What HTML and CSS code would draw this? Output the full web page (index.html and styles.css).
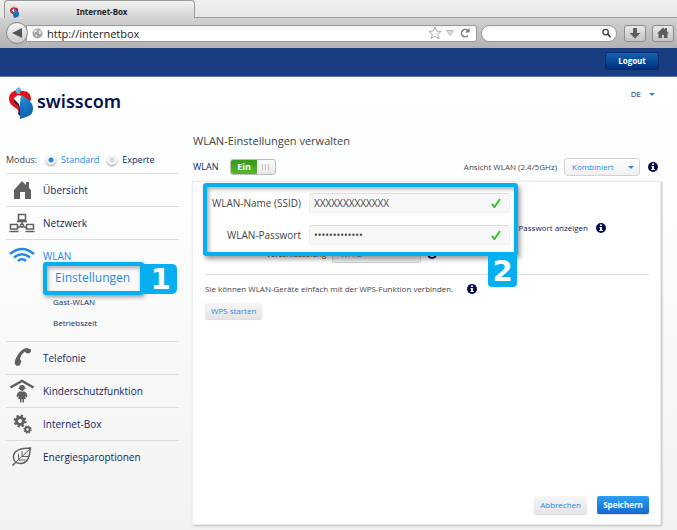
FILE: index.html
```html
<!DOCTYPE html>
<html lang="de">
<head>
<meta charset="utf-8">
<meta name="viewport" content="width=device-width, initial-scale=1">
<title>Internet-Box</title>
<link rel="stylesheet" href="styles.css">
</head>
<body>
<svg class="defs" aria-hidden="true">
  <defs>
    <linearGradient id="red" x1="0" y1="0" x2="1" y2="1"><stop offset="0" stop-color="#f0121c"/><stop offset="1" stop-color="#d80d18"/></linearGradient>
    <linearGradient id="blue" x1="0" y1="0" x2="1" y2="1"><stop offset="0" stop-color="#6fcdf2"/><stop offset=".5" stop-color="#1c80cc"/><stop offset="1" stop-color="#0a57a8"/></linearGradient>
  </defs>
  <symbol id="mark" viewBox="0 0 24 32">
    <path fill="url(#red)" d="M8 3C3 4 0 7 0 12c0 4 3 7 8 10l3 4 2-14 8 3 1-3c0-5-3-8-8-8z"/>
    <path fill="#fff" d="M5 11l4-3 3 1v10l-2 3-1-3-4-3z"/>
    <path fill="#4a0d22" d="M5 12l5 5 1 4 1 9-3-3 1-4-1-4-4-3z"/>
    <path fill="url(#blue)" d="M7 2l2.500-2L12 2l-1 5H9C7 6 6 4 7 2zM12 8c6 3 12 7 12 13 0 6-3 8-7 9l-6 2V17z"/>
    <path fill="#0b4c9b" d="M12 9l5 21-6 2V17z" opacity=".3"/>
  </symbol>
  <symbol id="info" viewBox="0 0 10 10"><circle cx="5" cy="5" r="5" fill="#020b52"/><path fill="#fff" d="M4 1.500h2v1.500H4zM3.500 4H6v3h.8v1H3.400V7H4V5h-.5z"/></symbol>
  <symbol id="check" viewBox="0 0 10 10"><path d="M1 6l2.500 3L9 1" fill="none" stroke="#2fca2f" stroke-width="2"/></symbol>
</svg>

<header class="browser">
  <div class="tabs">
    <div class="tab"><svg class="favicon"><use href="#mark"/></svg><span>Internet-Box</span></div>
    <div class="tab-rest"></div>
  </div>
  <div class="toolbar">
    <button class="back" aria-label="Zurück"><svg viewBox="0 0 10 10"><path d="M0 5l10-5v10z" fill="#555"/></svg></button>
    <div class="address">
      <svg class="globe" viewBox="0 0 12 12"><circle cx="6" cy="6" r="5.500" fill="#a2a2a2"/><path fill="#e6e6e6" d="M2 3l2-1.500 2 .5-1 2-2 1-.5 2zM7 3l2-.5 1.500 2L9 7 7.500 6zM4 7l2 .5L5 10 4 9z"/></svg>
      <input type="text" value="http://internetbox" aria-label="Adresse">
      <svg class="star" viewBox="0 0 14 14"><path d="M7 1l1.700 4 4.300.4-3.300 2.800 1 4.300L7 10.200l-3.700 2.300 1-4.300L1 5.400 5.300 5z" fill="#fff" stroke="#aaa"/></svg>
      <svg class="drop" viewBox="0 0 8 6"><path d="M.5.500h7L4 5.500z" fill="#ddd" stroke="#bbb"/></svg>
      <svg class="reload" viewBox="0 0 10 10"><path d="M8 7.500A3.700 3.700 0 1 1 7.500 2.200" fill="none" stroke="#777" stroke-width="1.500"/><path d="M9.500 0v4.500H5z" fill="#777"/></svg>
    </div>
    <div class="search">
      <input type="search" aria-label="Suche">
      <svg viewBox="0 0 10 10"><circle cx="4" cy="4" r="3" fill="none" stroke="#444" stroke-width="1.500"/><path d="M6 6l3.500 3.500" stroke="#444" stroke-width="2"/></svg>
    </div>
    <button class="tool" aria-label="Downloads"><svg viewBox="0 0 12 12"><path d="M4 1h4v5h3.500L6 11.500.5 6H4z" fill="#5e5e5e"/></svg></button>
    <button class="tool" aria-label="Startseite"><svg viewBox="0 0 12 12"><path d="M6 .5l2 2V1h2v3.500L12 6.500h-1.500V11H7V8H5v3H1.500V6.500H0z" fill="#5e5e5e"/></svg></button>
  </div>
</header>

<div class="topbar"><button class="logout">Logout</button></div>

<div class="brandbar">
  <a class="brand" href="#"><svg><use href="#mark"/></svg><span>swisscom</span></a>
  <button class="lang">DE <i class="caret"></i></button>
</div>

<div class="page">
  <aside>
    <div class="mode" role="radiogroup" aria-label="Modus">
      <span>Modus:</span>
      <label class="on"><input type="radio" name="mode" checked>Standard</label>
      <label><input type="radio" name="mode">Experte</label>
    </div>
    <nav>
      <div class="item"><a href="#"><svg viewBox="0 0 26 22"><path fill="#606060" d="M13 2l4 4V3h3v6l2 2v9h-6v-7h-5v7H5v-9z"/></svg>Übersicht</a></div>
      <div class="item"><a href="#"><svg viewBox="0 0 26 22"><g fill="none" stroke="#606060" stroke-width="1.500"><path d="M9.500 2.500h7V8h-7zM1.500 12.500h7V17h-7zM17.500 12.500h7V17h-7zM13 8v4M9 15.500l3-1M14 14.500l3 1M8 9.500h10M.5 19.500h9M16.500 19.500h9"/><circle cx="13" cy="13.500" r="1.500"/></g></svg>Netzwerk</a></div>
      <div class="item active">
        <a href="#"><svg viewBox="0 0 26 22"><g fill="none" stroke="#2489ea" stroke-width="2.400"><path d="M1 9Q13-1 25 9M5 12.500q8-6.500 16 0M9 16q4-3.500 8 0"/></g></svg>WLAN</a>
        <ul>
          <li class="current"><a href="#">Einstellungen</a><b class="badge one">1</b></li>
          <li><a href="#">Gast-WLAN</a></li>
          <li><a href="#">Betriebszeit</a></li>
        </ul>
      </div>
      <div class="item"><a href="#"><svg viewBox="0 0 26 22"><path fill="#606060" d="M18 1l4 1.500c.5 1.500-.5 3-2 4l-3-.5-1-1.500c-3 2-5 5-5 8l1.500 1.500-1.500 4c-2 1.500-4 1-5-1-1-3 2-9 6-13 2-2 4-3 6-3z"/></svg>Telefonie</a></div>
      <div class="item"><a href="#"><svg class="tall" viewBox="0 0 26 24"><path d="M1.500 8.500L13 2l11.500 6.500" fill="none" stroke="#606060" stroke-width="2.500"/><path fill="#606060" d="M10 9q0-3 3-3t3 3l1 1h-1.500q-2.500 4-5 0H9zM10.500 12.500h5l2 1.500 1 3-1 1.500-1.500-2 1 3.500H15v3.500h-1.500V20h-1v3.500H11V20H9l1-3.500-1.500 2-1-1.500 1-3z"/></svg>Kinderschutzfunktion</a></div>
      <div class="item"><a href="#"><svg viewBox="0 0 26 22"><g fill="none" stroke="#606060"><circle cx="11" cy="8" r="3.500" stroke-width="3"/><circle cx="11" cy="8" r="5.500" stroke-width="2" stroke-dasharray="2.300 2.020"/><circle cx="18.500" cy="16.500" r="2.200" stroke-width="2"/><circle cx="18.500" cy="16.500" r="3.500" stroke-width="1.300" stroke-dasharray="1.500 1.250"/></g></svg>Internet-Box</a></div>
      <div class="item"><a href="#"><svg viewBox="0 0 26 22"><g fill="none" stroke="#606060"><path stroke-width="1.500" d="M21.500 2C13 2 4 4 4.500 11c0 4 3 6.500 7 6.500 8 0 9-8 10-15.500zM3.500 19.500L7 16"/><path d="M7 16L21 3M9.500 14V7.500M13 10.500V5M9.500 14h7M13 10.500h6"/></g></svg>Energiesparoptionen</a></div>
    </nav>
  </aside>

  <main>
    <h1>WLAN-Einstellungen verwalten</h1>
    <div class="controls">
      <label class="wlan">WLAN <input type="checkbox" checked><span class="switch"><span>Ein</span><i></i></span></label>
      <label class="view" for="view">Ansicht WLAN (2.4/5GHz)</label>
      <span class="select"><select id="view"><option>Kombiniert</option></select><i class="caret"></i></span>
      <svg class="info"><use href="#info"/></svg>
    </div>
    <form class="panel">
      <div class="highlight">
        <label for="ssid">WLAN-Name (SSID)</label>
        <div class="field"><input id="ssid" type="text" value="XXXXXXXXXXXXX"><svg><use href="#check"/></svg></div>
        <label for="pw">WLAN-Passwort</label>
        <div class="field"><input id="pw" type="password" value="internetbox12" autocomplete="off"><svg><use href="#check"/></svg></div>
        <b class="badge two">2</b>
      </div>
      <div class="show"><a href="#">Passwort anzeigen</a><svg class="info"><use href="#info"/></svg></div>
      <div class="crypt">
        <label for="crypt">Verschlüsselung</label>
        <span class="select wide"><select id="crypt"><option>WPA2</option></select><i class="caret"></i></span>
        <svg class="info"><use href="#info"/></svg>
      </div>
      <div class="wps"><p>Sie können WLAN-Geräte einfach mit der WPS-Funktion verbinden.</p><svg class="info"><use href="#info"/></svg></div>
      <button type="button" class="btn">WPS starten</button>
      <div class="actions"><button type="button" class="btn">Abbrechen</button><button type="button" class="btn primary">Speichern</button></div>
    </form>
  </main>
</div>
</body>
</html>
```

FILE: styles.css
```css
* { box-sizing: border-box; }
body {
  margin: 0;
  min-height: 100vh;
  display: flex;
  flex-direction: column;
  font: 400 10px/14px "Open Sans", "Noto Sans", sans-serif;
  color: #444;
  background: linear-gradient(#fff 76px, #fdfefe 180px, #f2f2f2 100%);
}
button, input, select { font: inherit; color: inherit; margin: 0; padding: 0; border: 0; background: none; outline: 0; }
a { color: inherit; text-decoration: none; }
svg { display: block; flex: none; }
.defs { position: absolute; width: 0; height: 0; }

.browser { background: linear-gradient(#efefef, #e6e6e6 17px, #d0d0d0 19px, #b2b2b2); }
.tabs { display: flex; height: 18px; }
.tab {
  display: flex;
  align-items: center;
  width: 191px;
  margin-left: 4px;
  padding: 4px 5px 0;
  border: 1px solid #999;
  border-bottom: 0;
  border-radius: 4px 4px 0 0;
  background: linear-gradient(#f2f2f2, #d3d3d3);
  color: #222;
  font: bold 8px/14px "Noto Sans", sans-serif;
}
.tab span { flex: 1; text-align: center; padding-right: 4px; }
.favicon { width: 9px; height: 12px; }
.tab-rest { flex: 1; border-bottom: 1px solid #999; }
.toolbar { display: flex; align-items: center; height: 30px; padding: 0 3px 0 6px; }
.back {
  display: grid;
  place-items: center;
  width: 22px;
  height: 22px;
  border: 1px solid #888;
  border-radius: 50%;
  background: linear-gradient(#f5f5f5, #ccc);
  z-index: 1;
}
.back svg { width: 10px; height: 10px; }
.address, .search {
  display: flex;
  align-items: center;
  height: 17px;
  border: 1px solid #999;
  background: linear-gradient(#f4f4f4, #fff 5px);
}
.address { flex: 1; gap: 4px; margin-left: -2px; padding: 0 3px 0 5px; border-radius: 0 3px 3px 0; }
.address input { flex: 1; min-width: 0; font-size: 11px; line-height: 15px; color: #222; }
.globe { width: 11px; height: 11px; }
.star { width: 14px; height: 14px; }
.drop { width: 8px; height: 6px; }
.reload { width: 10px; height: 10px; margin: 0 3px 0 2px; }
.search { width: 136px; margin: 0 7px 0 4px; padding: 0 5px; border-radius: 9px; }
.search input { flex: 1; min-width: 0; }
.search svg { width: 9px; height: 10px; }
.tool {
  display: grid;
  place-items: center;
  width: 22px;
  height: 17px;
  border: 1px solid #8c8c8c;
  border-radius: 3px;
  background: linear-gradient(#e8e8e8, #c4c4c4);
}
.tool + .tool { margin-left: 6px; }
.tool svg { width: 12px; height: 12px; }

.topbar { display: flex; justify-content: flex-end; height: 29px; padding: 4px 18px 0; background: #193d80; border-bottom: 1px solid #5a75a8; }
.logout {
  width: 54px;
  height: 18px;
  border: 1px solid #062a6b;
  border-radius: 2px;
  background: linear-gradient(#1064b4, #012e78);
  color: #fff;
  font-size: 8px;
  font-weight: 700;
}

.brandbar { display: flex; justify-content: space-between; align-items: flex-start; height: 53px; padding: 10px 22px 0 9px; }
.brand { display: flex; gap: 4px; color: #06104f; font: 600 18px/28px "Noto Sans", sans-serif; }
.brand svg { width: 24px; height: 32px; }
.lang { display: flex; align-items: center; gap: 8px; color: #111f5e; font-size: 8px; line-height: 14px; }
.caret { border: 3px solid transparent; border-top-color: #2489ea; border-bottom: 0; width: 0; height: 0; }

.page { flex: 1; display: grid; grid-template-columns: 173px 1fr; column-gap: 13px; padding: 0 16px 5px 6px; }
.mode { display: flex; align-items: center; height: 43px; padding-top: 17px; font-size: 9px; }
.mode span { width: 40px; }
.mode label { display: flex; align-items: center; gap: 5px; margin-right: 8px; color: #111f5e; font-weight: 500; }
.mode .on { color: #2489ea; }
.mode input {
  appearance: none;
  width: 10px;
  height: 10px;
  border-radius: 50%;
  background: radial-gradient(#d9d9d9 2px, #f4f4f4 3px);
  box-shadow: 0 1px 2px #888;
}
.mode input:checked { background: radial-gradient(#2489ea 2px, #f4f4f4 3px); }

.item { border-top: 1px solid #dcdcdc; }
.item > a { display: flex; align-items: center; gap: 8px; height: 32px; padding-left: 3px; color: #111f5e; font-weight: 500; }
.item svg { width: 26px; height: 22px; }
.item svg.tall { height: 24px; }
.item.active > a { color: #2489ea; }
.item ul { position: relative; margin: 0; padding: 19px 0 8px; list-style: none; font-size: 8px; font-weight: 500; line-height: 21px; color: #111f5e; }
.item li { padding-left: 47px; }
.item .current {
  position: absolute;
  left: 37px;
  top: -10px;
  width: 101px;
  height: 33px;
  padding: 0 0 0 8px;
  border: 4px solid #05aff0;
  border-radius: 3px;
  background: #fafafa;
  box-shadow: 1px 2px 4px #0006, inset 1px 2px 4px #0005;
  color: #2489ea;
  font-size: 12px;
  line-height: 24px;
}
.badge {
  position: absolute;
  display: grid;
  place-items: center;
  background: #05aff0;
  color: #fff;
  font: bold 29px/28px "DejaVu Sans", "Open Sans", sans-serif;
}
.one { left: 97px; top: -2px; width: 33px; height: 30px; border-radius: 0 5px 5px 0; }
.two { right: -3px; top: 68px; width: 29px; height: 32px; border-radius: 0 0 4px 4px; }

main { display: flex; flex-direction: column; min-width: 0; }
h1 { margin: 4px 0 10px 1px; font-size: 11px; font-weight: 400; line-height: 14px; color: #444; }
.controls { display: flex; align-items: center; height: 18px; margin-bottom: 5px; padding-left: 1px; font-size: 8px; }
.wlan { position: relative; display: flex; align-items: center; justify-content: space-between; width: 83px; margin-right: auto; color: #111f5e; font-size: 9px; font-weight: 500; }
.wlan input { position: absolute; opacity: 0; }
.switch { display: flex; width: 46px; height: 16px; border: 1px solid #bbb; border-radius: 3px; overflow: hidden; background: linear-gradient(#fff, #e5e5e5); line-height: 14px; text-align: center; }
.switch span { width: 26px; background: linear-gradient(#38961c, #58b829); color: #fff; font-weight: bold; }
.switch i { width: 7px; height: 6px; margin: 4px 5px; background: repeating-linear-gradient(90deg, #c4c4c4 0 1px, transparent 1px 3px); }
.view { margin-right: 7px; }
.select { position: relative; width: 76px; height: 18px; margin-right: 8px; }
.select select { appearance: none; width: 100%; height: 100%; padding-left: 7px; border: 1px solid #d2d2d2; border-radius: 3px; background: linear-gradient(#fff, #f0f0f0); color: #2489ea; font-weight: 500; }
.select .caret { position: absolute; right: 6px; top: 8px; pointer-events: none; }
.select.wide { width: 89px; }
.wide select { background: #f0f0f0; }
.info { width: 10px; height: 10px; }
.controls .info { margin-right: 3px; }

.panel { position: relative; flex: 1; display: flex; flex-direction: column; align-items: flex-start; padding: 37px 11px 10px 12px; background: #fff; border: 1px solid #ececec; box-shadow: 1px 1px 2px #bbb; font-size: 8px; }
.highlight {
  position: absolute;
  z-index: 1;
  left: 10px;
  top: 1px;
  width: 315px;
  height: 73px;
  display: grid;
  grid-template-columns: 94px 1fr;
  align-content: center;
  align-items: center;
  gap: 12px 8px;
  padding: 0 4px 2px 0;
  border: 4px solid #05aff0;
  border-radius: 3px;
  background: #fff;
  box-shadow: 2px 3px 5px #0006, inset 2px 2px 4px #0005;
  font-size: 10px;
  text-align: right;
  white-space: nowrap;
}
.field { display: flex; align-items: center; height: 20px; padding: 0 8px 0 4px; border: 1px solid #eee; border-top-color: #ddd; border-radius: 3px; background: #f7f7f7; }
.field input { flex: 1; min-width: 0; }
.field svg { width: 10px; height: 10px; }
.show { display: flex; align-items: center; gap: 8px; align-self: flex-end; height: 18px; margin-right: 43px; color: #111f5e; font-weight: 500; }
.crypt { display: flex; align-items: center; gap: 6px; width: 100%; height: 37px; padding: 0 0 4px 61px; }
.crypt .select { margin: 0; }
.wps { display: flex; align-items: center; gap: 14px; align-self: stretch; height: 29px; border-top: 1px solid #ddd; }
.wps p { margin: 0; }
.btn { height: 16px; min-width: 54px; padding: 0 6px; border-radius: 2px; background: linear-gradient(#f6f6f6, #e4e4e4); color: #2489ea; font-size: 8px; font-weight: 500; box-shadow: 0 1px 1px #ddd; }
.actions { display: flex; gap: 10px; align-self: flex-end; margin-top: auto; }
.actions .btn { height: 18px; min-width: 52px; }
.btn.primary { background: linear-gradient(#2ca0f6, #1568cc); color: #fff; font-weight: bold; }
```
